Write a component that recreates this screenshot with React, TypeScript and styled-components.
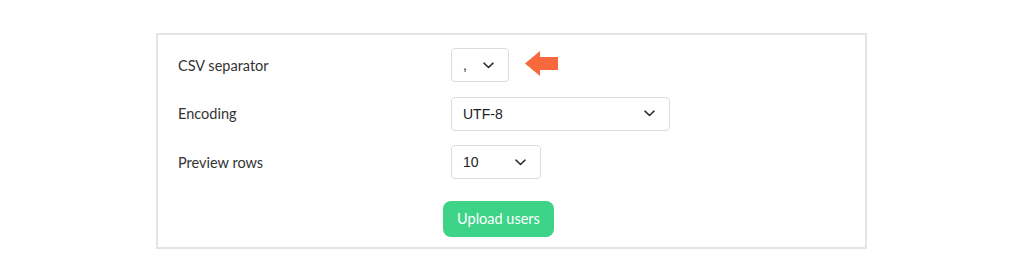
import React from "react";
import styled, { createGlobalStyle } from "styled-components";

const Global = createGlobalStyle`
  html, body { margin: 0; padding: 0; background: #ffffff; }
  body { font-family: "Lato", "Noto Sans", sans-serif; }
`;

const Page = styled.div`
  width: 1024px;
  height: 275px;
  padding-top: 33px;
  padding-left: 156px;
  box-sizing: border-box;
`;

const Panel = styled.div`
  width: 711px;
  height: 216px;
  box-sizing: border-box;
  border: 2px solid #e4e4e4;
  padding: 13px 20px 0 20px;
  display: grid;
  grid-template-columns: 273px 1fr;
  grid-auto-rows: min-content;
  row-gap: 14.5px;
`;

const Label = styled.div`
  font-family: "Lato", "Noto Sans", sans-serif;
  font-size: 14.5px;
  color: #333333;
  display: flex;
  align-items: center;
  height: 34px;
`;

const Field = styled.div`
  display: flex;
  align-items: center;
  gap: 16px;
`;

const Select = styled.div<{ $w: number }>`
  width: ${(p) => p.$w}px;
  height: 34px;
  box-sizing: border-box;
  border: 1px solid #dcdcdc;
  border-radius: 4px;
  background: #fff;
  display: flex;
  align-items: center;
  justify-content: space-between;
  padding: 0 14px 0 11px;
  font-family: "Liberation Sans", Arial, sans-serif;
  font-size: 14px;
  color: #222;
`;

const ArrowWrap = styled.div`
  display: flex;
  margin-bottom: 4px;
`;

const ButtonCell = styled.div`
  grid-column: 2;
  padding-top: 7px;
  margin-left: -8px;
`;

const Button = styled.button`
  width: 111px;
  height: 36px;
  border: none;
  border-radius: 8px;
  background: #3ed488;
  color: #ffffff;
  font-family: "Lato", "Noto Sans", sans-serif;
  font-size: 14.5px;
  padding: 0;
  cursor: pointer;
`;

const Chevron = () => (
  <svg width="11" height="7" viewBox="0 0 11 7" fill="none">
    <path d="M1 1.2 L5.5 5.5 L10 1.2" stroke="#333" strokeWidth="1.6" strokeLinecap="round" strokeLinejoin="round" />
  </svg>
);

const Arrow = () => (
  <svg width="33" height="25" viewBox="0 0 33 25">
    <path d="M0 12.5 L15 0 L15 6 L33 6 L33 19 L15 19 L15 25 Z" fill="#f7693d" />
  </svg>
);

export default function App() {
  return (
    <>
      <Global />
      <Page>
        <Panel>
          <Label>CSV separator</Label>
          <Field>
            <Select $w={58}>
              <span>,</span>
              <Chevron />
            </Select>
            <ArrowWrap>
              <Arrow />
            </ArrowWrap>
          </Field>
          <Label>Encoding</Label>
          <Field>
            <Select $w={219}>
              <span>UTF-8</span>
              <Chevron />
            </Select>
          </Field>
          <Label>Preview rows</Label>
          <Field>
            <Select $w={90}>
              <span>10</span>
              <Chevron />
            </Select>
          </Field>
          <ButtonCell>
            <Button>Upload users</Button>
          </ButtonCell>
        </Panel>
      </Page>
    </>
  );
}
